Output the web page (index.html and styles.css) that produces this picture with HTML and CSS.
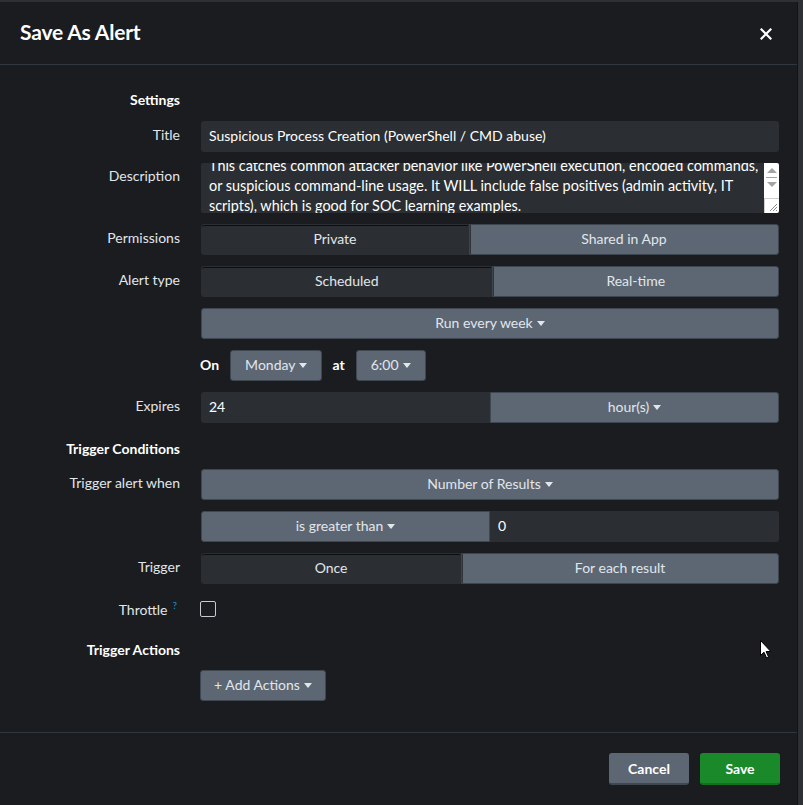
FILE: index.html
```html
<!DOCTYPE html>
<html lang="en">
<head>
<meta charset="utf-8">
<title>Save As Alert</title>
<link rel="stylesheet" href="styles.css">
</head>
<body>
<div class="modal">
  <div class="modal-header">
    <h1 class="modal-title">Save As Alert</h1>
    <button class="close" aria-label="Close">
      <svg width="12" height="12" viewBox="0 0 12 12"><path d="M1.5 1.5 L10.5 10.5 M10.5 1.5 L1.5 10.5" stroke="#ffffff" stroke-width="2.2" stroke-linecap="square"/></svg>
    </button>
  </div>

  <div class="modal-body">
    <div class="row heading"><div class="label">Settings</div></div>

    <div class="row r31">
      <div class="label">Title</div>
      <div class="control"><div class="input">Suspicious Process Creation (PowerShell / CMD abuse)</div></div>
    </div>

    <div class="row r50">
      <div class="label label-top">Description</div>
      <div class="control">
        <div class="textarea">
          <div class="textarea-text">This catches common attacker behavior like PowerShell execution, encoded commands,<br>or suspicious command-line usage. It WILL include false positives (admin activity, IT<br>scripts), which is good for SOC learning examples.</div>
          <div class="scrollbar">
            <div class="sb-track">
              <span class="sb-up"></span>
              <span class="sb-line"></span>
              <span class="sb-down"></span>
            </div>
            <div class="sb-resize">
              <svg width="10" height="10" viewBox="0 0 10 10"><path d="M9 2 L2 9 M9 5 L5 9 M9 8 L8 9" stroke="#8a8a8a" stroke-width="1"/></svg>
            </div>
          </div>
        </div>
      </div>
    </div>

    <div class="row r31">
      <div class="label">Permissions</div>
      <div class="control toggle">
        <div class="seg active">Private</div>
        <div class="seg">Shared in App</div>
      </div>
    </div>

    <div class="row r31">
      <div class="label">Alert type</div>
      <div class="control toggle">
        <div class="seg active">Scheduled</div>
        <div class="seg">Real-time</div>
      </div>
    </div>

    <div class="row r31">
      <div class="label"></div>
      <div class="control"><div class="btn btn-full">Run every week <span class="caret"></span></div></div>
    </div>

    <div class="row r31">
      <div class="label"></div>
      <div class="control inline">
        <span class="inline-label">On</span>
        <div class="btn btn-small">Monday <span class="caret"></span></div>
        <span class="inline-label">at</span>
        <div class="btn btn-small">6:00 <span class="caret"></span></div>
      </div>
    </div>

    <div class="row r31">
      <div class="label">Expires</div>
      <div class="control split">
        <div class="input input-left">24</div>
        <div class="btn btn-right">hour(s) <span class="caret"></span></div>
      </div>
    </div>

    <div class="row heading heading-2"><div class="label">Trigger Conditions</div></div>

    <div class="row r31">
      <div class="label">Trigger alert when</div>
      <div class="control"><div class="btn btn-full">Number of Results <span class="caret"></span></div></div>
    </div>

    <div class="row r31">
      <div class="label"></div>
      <div class="control split">
        <div class="btn btn-left">is greater than <span class="caret"></span></div>
        <div class="input input-right">0</div>
      </div>
    </div>

    <div class="row r31">
      <div class="label">Trigger</div>
      <div class="control toggle">
        <div class="seg active">Once</div>
        <div class="seg">For each result</div>
      </div>
    </div>

    <div class="row r31">
      <div class="label">Throttle<span class="help">?</span></div>
      <div class="control inline"><span class="checkbox"></span></div>
    </div>

    <div class="row heading heading-3"><div class="label">Trigger Actions</div></div>

    <div class="row r31">
      <div class="label"></div>
      <div class="control inline"><div class="btn btn-add">+ Add Actions <span class="caret"></span></div></div>
    </div>
  </div>

  <div class="modal-footer">
    <button class="btn footer-btn">Cancel</button>
    <button class="btn footer-btn btn-primary">Save</button>
  </div>
</div>

<svg class="cursor" width="12" height="19" viewBox="0 0 12 19"><path d="M0.5 0.5 L0.5 15.5 L4 12.2 L6.6 18 L8.6 17.1 L6.1 11.5 L10.8 11.5 Z" fill="#ffffff" stroke="#000000" stroke-width="1"/></svg>
</body>
</html>
```

FILE: styles.css
```css
* { box-sizing: border-box; }

html, body {
  margin: 0;
  padding: 0;
}

body {
  background: #2d3136;
  font-family: Lato, "Noto Sans", "Liberation Sans", sans-serif;
  font-size: 14px;
  color: #e1e6eb;
  width: 803px;
  height: 805px;
  overflow: hidden;
  position: relative;
}

.modal {
  margin-top: 2px;
  width: 798px;
  height: 803px;
  background: #1a1c20;
  border-right: 1px solid #111215;
  display: flex;
  flex-direction: column;
}

.modal-header {
  height: 63px;
  border-bottom: 1px solid #31373e;
  display: flex;
  align-items: center;
  justify-content: space-between;
  padding: 0 25px 0 20px;
  flex: none;
}

.modal-title {
  margin: 0;
  font-size: 21px;
  font-weight: 700;
  color: #ffffff;
  letter-spacing: -0.2px;
  padding-bottom: 3px;
}

.close {
  background: none;
  border: 0;
  padding: 0;
  width: 12px;
  height: 12px;
  display: flex;
  margin-top: 2px;
}

.modal-body {
  flex: 1;
  padding: 23px 18px 0 0;
  display: flex;
  flex-direction: column;
  gap: 11px;
}

.row {
  display: grid;
  grid-template-columns: 180px 578px;
  column-gap: 21px;
  align-items: center;
}

.r31 { height: 31px; }
.r50 { height: 50px; align-items: start; }

.label {
  text-align: right;
  color: #e1e6eb;
  font-size: 14px;
  white-space: nowrap;
  padding-bottom: 4px;
}

.label-top { padding-top: 4px; padding-bottom: 0; }

.heading { height: 22px; }
.heading .label {
  font-weight: 700;
  font-size: 14px;
  color: #ffffff;
  padding-bottom: 0;
}
.heading-2 { height: 24px; padding-top: 4px; }
.heading-3 { padding-top: 2px; }

.control {
  height: 100%;
  min-width: 0;
}

.input {
  height: 100%;
  background: #2b2f33;
  border-radius: 3px;
  padding: 0 8px 2px;
  display: flex;
  align-items: center;
  color: #ffffff;
}

.textarea {
  height: 50px;
  background: #2b2f33;
  border-radius: 2px;
  display: flex;
  overflow: hidden;
}

.textarea-text {
  flex: 1;
  padding: 0 0 0 8px;
  margin-top: -7px;
  line-height: 20px;
  font-size: 14.4px;
  color: #ffffff;
  white-space: nowrap;
}

.scrollbar {
  width: 15px;
  flex: none;
  background: #ffffff;
  display: flex;
  flex-direction: column;
}

.sb-track {
  height: 35px;
  display: flex;
  flex-direction: column;
  align-items: center;
  padding-top: 5px;
  gap: 4px;
}

.sb-up {
  width: 0;
  height: 0;
  border-left: 5px solid transparent;
  border-right: 5px solid transparent;
  border-bottom: 5px solid #a3a3a3;
}

.sb-line {
  width: 11px;
  height: 1px;
  background: #a3a3a3;
}

.sb-down {
  width: 0;
  height: 0;
  border-left: 5px solid transparent;
  border-right: 5px solid transparent;
  border-top: 5px solid #a3a3a3;
}

.sb-resize {
  flex: 1;
  border-top: 1px solid #d0d0d0;
  border-left: 1px solid #d0d0d0;
  display: flex;
  align-items: flex-end;
  justify-content: flex-end;
  padding: 0 1px 1px 0;
}

.toggle {
  display: flex;
}

.seg {
  flex: 1 1 auto;
  display: flex;
  align-items: center;
  justify-content: center;
  background: #5c6773;
  color: #e1e6eb;
  padding: 0 10px 2px;
  border: 1px solid #3c444d;
  white-space: nowrap;
}

.seg:first-child { border-radius: 3px 0 0 3px; }
.seg:last-child { border-radius: 0 3px 3px 0; }

.seg.active {
  background: #2b2f33;
  border-color: #2b2f33;
  box-shadow: inset 0 1px 0 #0c0d0f;
}

.seg + .seg.active,
.seg.active + .seg {
  box-shadow: inset 1px 0 0 #2f353b;
}

.btn {
  height: 100%;
  display: inline-flex;
  align-items: center;
  justify-content: center;
  gap: 5px;
  background: #5c6773;
  color: #e1e6eb;
  border: 1px solid #3f4750;
  border-radius: 3px;
  padding: 0 16px 2px;
  font-family: inherit;
  font-size: 14px;
  white-space: nowrap;
}

.btn-full { width: 100%; }

.btn-small { padding: 0 14px 2px; }

.caret {
  width: 0;
  height: 0;
  border-left: 4px solid transparent;
  border-right: 4px solid transparent;
  border-top: 5px solid #e1e6eb;
  margin-left: -1px;
  margin-top: 1px;
}

.inline {
  display: flex;
  align-items: center;
  gap: 11px;
}

.inline-label {
  font-weight: 700;
  color: #ffffff;
  margin-left: -1px;
  padding-bottom: 3px;
}

.split {
  display: flex;
}

.split > * { flex: 1 1 50%; width: 50%; }

.input-left { border-radius: 3px 0 0 3px; }
.btn-right { border-radius: 0 3px 3px 0; }
.btn-left { border-radius: 3px 0 0 3px; }
.input-right { border-radius: 0 3px 3px 0; }

.help {
  color: #1e93c6;
  font-size: 10px;
  vertical-align: super;
  margin-left: 5px;
  margin-right: 3px;
}

.checkbox {
  width: 16px;
  height: 16px;
  border: 1px solid #c3cbd4;
  border-radius: 2px;
  margin-left: -1px;
  margin-bottom: 4px;
}

.btn-add {
  width: 126px;
  padding: 0 10px 2px;
  margin-left: -1px;
}

.modal-footer {
  flex: none;
  height: 73px;
  border-top: 1px solid #31373e;
  display: flex;
  justify-content: flex-end;
  align-items: flex-start;
  gap: 11px;
  padding: 20px 17px 0 0;
}

.footer-btn {
  height: 32px;
  width: 80px;
  font-weight: 700;
  color: #ffffff;
  border: 0;
  border-bottom: 2px solid #3f4750;
  padding: 0;
}

.btn-primary {
  background: #1a8929;
  border-bottom-color: #12701e;
}

.cursor {
  position: absolute;
  left: 760px;
  top: 640px;
}
```
